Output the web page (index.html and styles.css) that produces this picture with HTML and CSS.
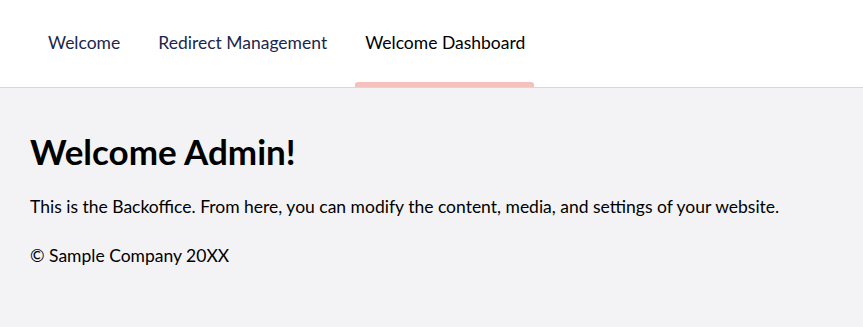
FILE: index.html
```html
<!DOCTYPE html>
<html lang="en">
<head>
  <meta charset="UTF-8">
  <title>Backoffice</title>
  <link rel="stylesheet" href="styles.css">
</head>
<body>
  <header class="top-bar">
    <nav class="tabs">
      <a class="tab" href="#">Welcome</a>
      <a class="tab" href="#">Redirect Management</a>
      <a class="tab active" href="#">Welcome Dashboard</a>
    </nav>
  </header>
  <main class="content">
    <h1>Welcome Admin!</h1>
    <p>This is the Backoffice. From here, you can modify the content, media, and settings of your website.</p>
    <p>&copy; Sample Company 20XX</p>
  </main>
</body>
</html>
```

FILE: styles.css
```css
body {
  margin: 0;
  font-family: Lato, sans-serif;
  background: #f3f3f5;
  color: #000;
}

/* Header tabs */
.top-bar {
  background: #fff;
  border-bottom: 1px solid #d8d7d9;
  height: 87px;
  padding-left: 29px;
}

.tabs {
  display: flex;
  height: 100%;
}

.tab {
  position: relative;
  display: flex;
  align-items: center;
  padding: 0 19px 3px;
  font-size: 17.5px;
  color: #1b264f;
  text-decoration: none;
}

.tab.active {
  color: #000;
}

.tab.active::after {
  content: "";
  position: absolute;
  left: 9px;
  right: 10px;
  bottom: 0;
  height: 5px;
  background: #f5c1bc;
  border-radius: 3px 3px 0 0;
}

/* Dashboard */
.content {
  padding: 42px 30px 30px;
}

h1 {
  font-size: 35px;
  font-weight: 700;
  margin: 0 0 24px;
}

p {
  font-size: 17.5px;
  margin: 0 0 28px;
}
```
